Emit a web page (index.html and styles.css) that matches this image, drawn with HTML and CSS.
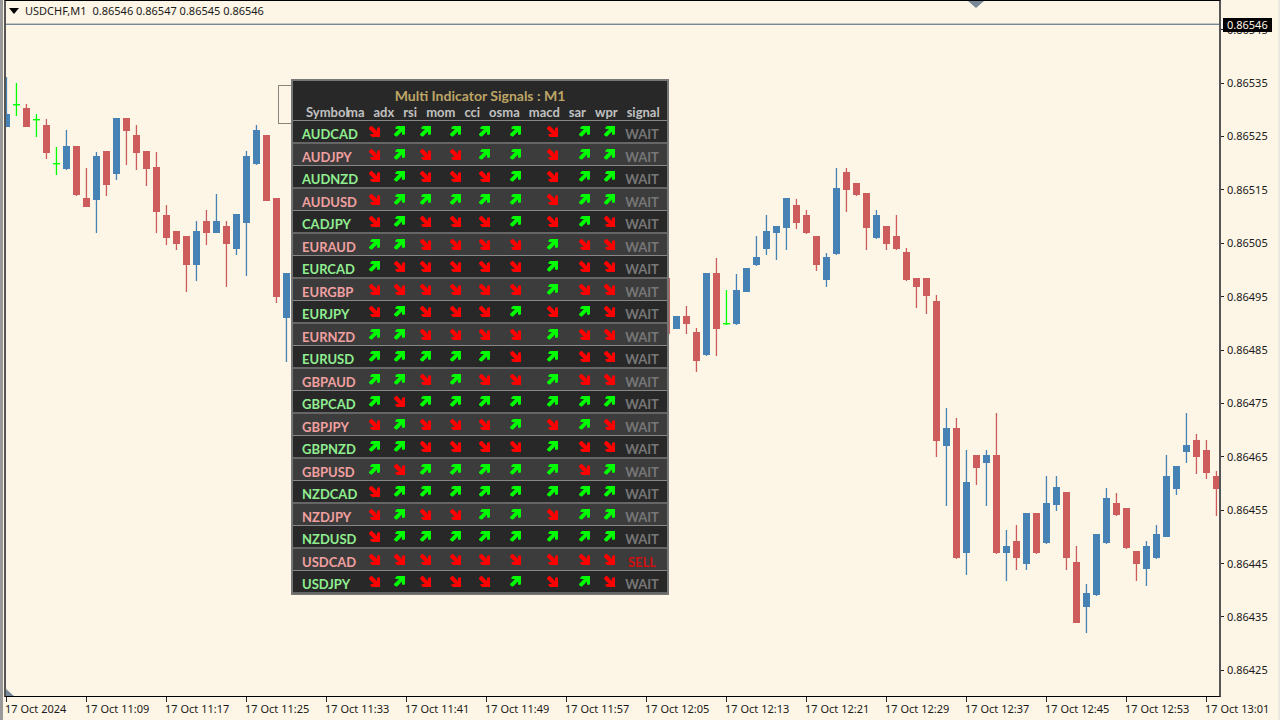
FILE: index.html
```html
<!DOCTYPE html>
<html lang="en">
<head>
<meta charset="utf-8">
<title>USDCHF,M1</title>
<link rel="stylesheet" href="styles.css">
</head>
<body>
<div class="terminal">
  <main class="plot">
    <svg class="candles" id="candles" viewBox="6 1 1213 695" preserveAspectRatio="none" aria-hidden="true">
      <rect class="price-line" x="6" y="23.6" width="1213" height="1.4"/>
      <path class="marker" d="M968 1h16l-8 7zM6 689l8 7H6z"/>
      <rect class="outline" x="278.5" y="85.5" width="20" height="38"/>
    </svg>
    <header class="quote">
      <svg class="caret" viewBox="0 0 10 6" aria-hidden="true"><path d="M0 0h10L5 6z"/></svg>
      <span>USDCHF,M1</span>
      <span>0.86546 0.86547 0.86545 0.86546</span>
    </header>
    <section class="panel">
      <h1 class="panel-title">Multi Indicator Signals : M1</h1>
      <table class="signals">
        <thead>
          <tr><th class="symbol-head">Symbol</th><th>ma</th><th>adx</th><th>rsi</th><th>mom</th><th>cci</th><th>osma</th><th>macd</th><th>sar</th><th>wpr</th><th>signal</th></tr>
        </thead>
        <tbody id="rows"></tbody>
      </table>
    </section>
  </main>
  <aside class="prices">
    <ol class="price-list" id="prices"></ol>
    <span class="current">0.86546</span>
  </aside>
  <ol class="times" id="times"></ol>
</div>
<script src="chart.js"></script>
</body>
</html>
```
FILE: styles.css
```css
* {
  box-sizing: border-box;
}

body {
  margin: 0;
  background: #fdf5e6;
  color: #1a1a1a;
  font: 11px/14px "Noto Sans", sans-serif;
}

ol {
  margin: 0;
  padding: 0;
  list-style: none;
}

.terminal {
  display: grid;
  grid-template-columns: 1fr 57px;
  grid-template-rows: 1fr 23px;
  height: 100vh;
  padding-left: 1px;
  border-left: 3px solid #999;
  border-right: 2px solid #ebe8e2;
  overflow: hidden;
}

.plot {
  position: relative;
  min-height: 0;
  border: 1px solid #000;
  border-left: 2px solid #555;
  border-right: 2px solid #555;
}

.candles {
  position: absolute;
  width: 100%;
  height: 100%;
}

.price-line,
.marker {
  fill: #778899;
}

.outline {
  fill: none;
  stroke: #8f827c;
}

.bull {
  fill: #4682b4;
}

.bear {
  fill: #cd5c5c;
}

.doji {
  fill: #00ff00;
}

.quote {
  position: relative;
  display: flex;
  align-items: center;
  gap: 6px;
  padding: 3px 3px 0;
}

.caret {
  width: 10px;
  height: 6px;
}

.panel {
  position: absolute;
  top: 78px;
  left: 285px;
  width: 378px;
  border: 2px solid #777;
  border-bottom-width: 1px;
  background: #282828;
  color: #c0c0c0;
  font-family: Lato, sans-serif;
  font-weight: 700;
}

.panel-title {
  margin: 0;
  padding-top: 6px;
  color: #bda566;
  font-size: 14px;
  line-height: 18px;
  text-align: center;
}

.signals {
  display: block;
}

.signals thead,
.signals tbody {
  display: block;
}

.signals thead tr {
  display: flex;
  gap: 9px;
  padding-left: 13px;
  border-bottom: 1px solid #888;
  font-size: 13px;
  line-height: 15px;
}

.signals th,
.signals td {
  padding: 0;
  text-align: left;
}

.signals .symbol-head {
  width: 32px;
}

.signals tbody tr {
  display: grid;
  grid-template-columns: 70px 23px 26px 27px 32px 27px 35px 39px 24px 26px 40px;
  align-items: center;
  justify-items: center;
  height: 23px;
  border-bottom: 2px solid #666;
  color: #90ee90;
  font-size: 13px;
  line-height: 16px;
}

.signals tbody tr:nth-child(even) {
  height: 22px;
  border-bottom: 1px solid #888;
  background: #3c3c3c;
  color: #f0a0a0;
}

.signals tbody .symbol {
  justify-self: start;
  padding: 4px 0 0 9px;
}

.signals tbody .signal {
  padding-top: 4px;
  color: #777;
}

.signals tbody .sell {
  color: #d01010;
}

.arrow {
  display: block;
  width: 11px;
  height: 11px;
}

.up {
  fill: #00ff00;
}

.down {
  fill: #ff0000;
}

.prices {
  position: relative;
  display: flex;
  padding-top: 3px;
}

.price-list {
  display: flex;
  flex-direction: column;
  flex: 1;
}

.price-list li {
  display: flex;
  flex: 1;
  align-items: center;
  gap: 3px;
}

.price-list li::before {
  width: 3px;
  height: 1px;
  background: #222;
  content: "";
}

.current {
  position: absolute;
  top: 18px;
  left: 2px;
  padding: 0 4px;
  background: #000;
  color: #fdf5e6;
}

.times {
  display: grid;
  grid-column: 1 / -1;
  grid-auto-flow: column;
  grid-auto-columns: 80px;
  padding-left: 1px;
  white-space: nowrap;
}

.times li::before {
  display: block;
  width: 1px;
  height: 5px;
  margin-left: 1px;
  background: #222;
  content: "";
}
```
FILE: chart.js
```js
// Each candle: type, high, body top, body bottom, low. Candles sit 10 units apart.
const early = `b 77 114 127 127|g 83 104 104 116|r 104 108 127 127|g 114 119 119 137|r 119 125 153 159|g 147 163 163 175|b 130 146 169 170|r 146 146 195 196|r 168 198 207 207|b 152 156 200 233|r 151 151 185 196|b 118 118 174 180|r 118 118 131 165|r 125 135 153 170|r 151 151 169 186|r 152 167 212 233|r 205 215 238 245|r 231 231 244 250|r 236 236 265 292|b 221 231 265 281|r 210 221 233 245|b 194 221 233 233|r 221 226 244 287|b 214 214 249 255|b 151 156 223 276|b 125 130 164 165|r 135 135 201 201|r 198 198 297 303|b 273 273 318 362`;
const late = `r 278 278 334 334|b 316 316 329 329|r 306 316 324 334|r 328 332 361 372|b 273 273 355 356|r 258 273 329 356|g 290 323 323 325|b 274 290 324 325|b 268 268 292 292|b 236 257 265 266|b 215 231 249 255|b 226 226 233 260|b 198 198 228 250|r 199 205 223 229|r 210 215 233 234|r 236 236 265 271|b 253 257 280 287|b 168 188 254 255|r 168 172 190 212|r 183 183 195 196|r 193 193 228 250|b 210 215 238 239|r 226 226 244 250|r 215 236 249 250|r 248 252 280 281|r 278 278 287 308|r 278 278 296 314|r 295 301 441 457|b 408 428 446 506|r 418 428 558 559|b 450 482 553 575|r 455 455 468 485|b 450 455 463 506|r 413 455 553 554|b 530 546 553 581|r 525 541 558 570|b 513 513 564 570|r 513 513 553 554|b 476 503 543 544|b 476 487 505 511|r 492 492 558 570|r 546 562 623 623|b 584 593 607 633|b 534 534 595 596|b 488 498 543 544|r 493 503 515 516|r 508 508 548 549|r 551 551 564 581|b 541 546 569 586|b 525 534 558 559|b 455 476 537 537|b 466 466 489 495|b 413 445 452 463|r 434 440 457 474|r 440 450 473 479|r 471 476 489 516`;
const types = { b: "bull", r: "bear", g: "doji" };

function drawCandles(series, firstX) {
  return series.split("|").map((item, i) => {
    const [type, ...values] = item.split(" ");
    const [high, top, bottom, low] = values.map(Number);
    const x = firstX + i * 10;
    return `<g class="${types[type]}"><rect x="${x - 0.2}" y="${high}" width="1.3" height="${low - high}"/><rect x="${x - 3}" y="${top}" width="7" height="${Math.max(bottom - top, 1.4)}"/></g>`;
  }).join("");
}

document.getElementById("candles").insertAdjacentHTML(
  "beforeend", drawCandles(early, 6) + drawCandles(late, 666));

// u = up arrow, d = down arrow, in column order.
const rows = [
  ["AUDCAD", "duuuuuduu"], ["AUDJPY", "dudduuduu"], ["AUDNZD", "dudddu" + "duu"],
  ["AUDUSD", "duuuuuduu"], ["CADJPY", "dudddudud"], ["EURAUD", "uuddddudd"],
  ["EURCAD", "udddddudd"], ["EURGBP", "ddddddudd"], ["EURJPY", "dudddudud"],
  ["EURNZD", "uuddddudd"], ["EURUSD", "uuuuududd"], ["GBPAUD", "uududdudd"],
  ["GBPCAD", "uduuuuuuu"], ["GBPJPY", "dudddudud"], ["GBPNZD", "uuddddudd"],
  ["GBPUSD", "uduuuuudu"], ["NZDCAD", "duuuuuuuu"], ["NZDJPY", "dudduuduu"],
  ["NZDUSD", "duuuuuuuu"], ["USDCAD", "ddddddddd"], ["USDJPY", "dudddudud"]
];
const arrows = {
  u: '<svg class="arrow up" viewBox="0 0 11 11" role="img" aria-label="up"><path d="M2 10.500h1l5-5v3l2 .5 1-1V0H3L1 2l1 1h3L0 8v1z"/></svg>',
  d: '<svg class="arrow down" viewBox="0 0 11 11" role="img" aria-label="down"><path d="M2 0h1l5 5V2l2-1 1 1v9H3L1 9l1-1h3L0 3V2z"/></svg>'
};
document.getElementById("rows").innerHTML = rows.map(([symbol, trend]) => {
  const cells = [...trend].map(t => `<td>${arrows[t]}</td>`).join("");
  const sell = symbol === "USDCAD";
  return `<tr><td class="symbol">${symbol}</td>${cells}<td class="signal${sell ? " sell" : ""}">${sell ? "SELL" : "WAIT"}</td></tr>`;
}).join("");

const list = items => items.map(text => `<li>${text}</li>`).join("");
document.getElementById("prices").innerHTML = list(
  Array.from({ length: 13 }, (_, i) => ((86545 - i * 10) / 100000).toFixed(5)));
document.getElementById("times").innerHTML = list(
  Array.from({ length: 16 }, (_, i) => {
    const minute = 661 + i * 8;
    const time = `${Math.floor(minute / 60)}:${String(minute % 60).padStart(2, "0")}`;
    return `17 Oct ${i ? time : "2024"}`;
  }));
```
